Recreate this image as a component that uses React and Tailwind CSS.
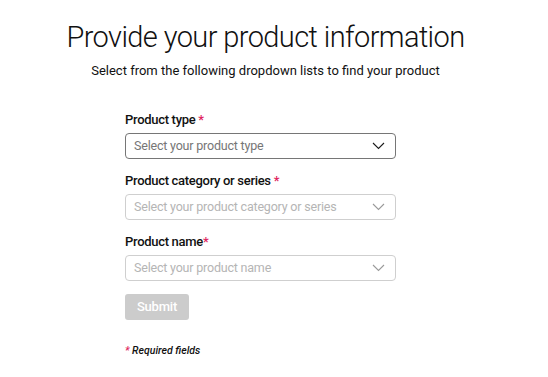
import React from 'react';

const Chevron = ({ light }) => (
  <svg width="13" height="8" viewBox="0 0 13 8" fill="none" className="shrink-0">
    <path d="M1 1l5.5 5.5L12 1" stroke={light ? '#9a9a9a' : '#1a1a1a'} strokeWidth="1.1" />
  </svg>
);

const Field = ({ label, tight, placeholder, active }) => (
  <div className="flex flex-col">
    <label className="text-[13px] font-medium text-[#111] leading-[18px] tracking-[-0.3px]">
      {label}
      {tight ? '' : ' '}
      <span className="text-[#e0245e]">*</span>
    </label>
    <div
      className={
        active
          ? 'mt-[4px] h-[26px] flex items-center justify-between pl-[8px] pr-[10px] rounded-[4px] border border-[#767676] bg-white'
          : 'mt-[4px] h-[26px] flex items-center justify-between pl-[8px] pr-[10px] rounded-[4px] border border-[#cfcfcf] bg-white'
      }
    >
      <span className={active ? 'text-[12.5px] text-[#767676] tracking-[-0.2px]' : 'text-[12.5px] text-[#b5b5b5] tracking-[-0.2px]'}>
        {placeholder}
      </span>
      <Chevron light={!active} />
    </div>
  </div>
);

const App = () => {
  return (
    <div className="w-[531px] min-h-[377px] bg-white font-['Roboto',sans-serif]">
      <div className="pt-[18px] text-center">
        <h1 className="text-[29px] font-light text-[#111] leading-[38px] tracking-[-0.6px]">
          Provide your product information
        </h1>
        <p className="mt-[6px] text-[13px] text-[#111] leading-[18px]">
          Select from the following dropdown lists to find your product
        </p>
      </div>

      <form className="ml-[125px] w-[271px] mt-[31px] flex flex-col gap-[13px]">
        <Field label="Product type" placeholder="Select your product type" active />
        <Field label="Product category or series" placeholder="Select your product category or series" />
        <Field label="Product name" tight placeholder="Select your product name" />
        <button
          type="button"
          className="self-start w-[64px] h-[26px] rounded-[3px] bg-[#cccccc] text-white text-[13px] font-medium tracking-[-0.2px]"
        >
          Submit
        </button>
        <p className="mt-[10px] text-[10.5px] leading-[16px] italic font-medium text-[#111]">
          <span className="text-[#e0245e]">*</span> Required fields
        </p>
      </form>
    </div>
  );
};

export default App;
